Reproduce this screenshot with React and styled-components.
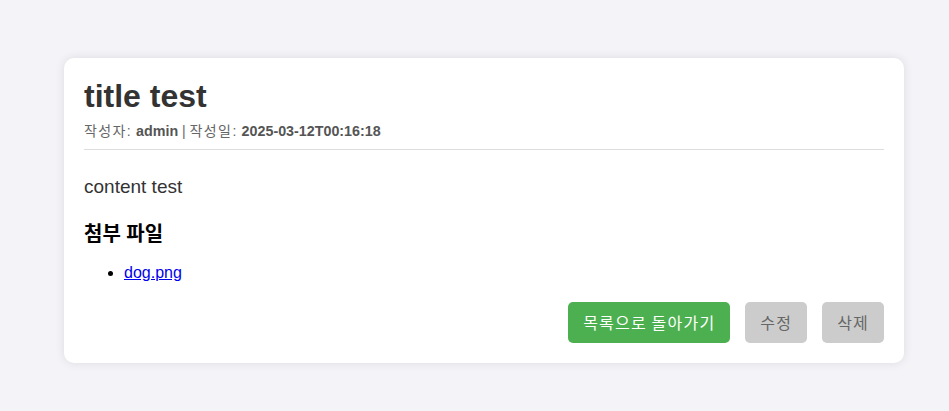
import React from "react";
import styled, { createGlobalStyle } from "styled-components";

const Global = createGlobalStyle`
  html, body { margin: 0; padding: 0; background: #f4f4f8; }
  body { font-family: "Liberation Sans", Arial, "Noto Sans CJK KR", sans-serif; }
`;

const Page = styled.div`
  padding: 58px 45px 40px 64px;
`;

const Card = styled.div`
  background: #fff;
  border-radius: 10px;
  box-shadow: 0 0 10px rgba(0, 0, 0, 0.1);
  padding: 20px;
`;

const Header = styled.div`
  border-bottom: 1px solid #ddd;
  padding-bottom: 9px;
  margin-bottom: 26px;
`;

const Title = styled.h1`
  margin: 0 0 5px;
  font-size: 32px;
  color: #333;
`;

const Meta = styled.div`
  font-size: 14px;
  color: #666;
  b { color: #555; font-size: 14.3px; }
`;

const Label = styled.span`
  letter-spacing: 1.4px;
`;

const Content = styled.p`
  margin: 0 0 20px;
  font-size: 19px;
  color: #333;
`;

const SubTitle = styled.h3`
  margin: 0 0 17px;
  font-size: 20px;
  color: #000;
`;

const FileList = styled.ul`
  margin: 0;
  padding-left: 40px;
  font-size: 16px;
  a { color: #0000ee; }
`;

const Actions = styled.div`
  display: flex;
  justify-content: flex-end;
  gap: 15px;
  margin-top: 20px;
`;

const Button = styled.button`
  border: none;
  border-radius: 5px;
  padding: 10px 15px;
  font-size: 16px;
  font-family: "Noto Sans CJK KR", sans-serif;
  line-height: 21px;
  letter-spacing: 1.2px;
  background: ${(p) => (p.$primary ? "#4caf50" : "#ccc")};
  color: ${(p) => (p.$primary ? "#fff" : "#666")};
  cursor: pointer;
`;

export default function App() {
  return (
    <>
      <Global />
      <Page>
        <Card>
          <Header>
            <Title>title test</Title>
            <Meta>
              <Label>작성자:</Label> <b>admin</b> | <Label>작성일:</Label>{" "}
              <b>2025-03-12T00:16:18</b>
            </Meta>
          </Header>
          <Content>content test</Content>
          <SubTitle>첨부 파일</SubTitle>
          <FileList>
            <li>
              <a href="#">dog.png</a>
            </li>
          </FileList>
          <Actions>
            <Button $primary>목록으로 돌아가기</Button>
            <Button>수정</Button>
            <Button>삭제</Button>
          </Actions>
        </Card>
      </Page>
    </>
  );
}
